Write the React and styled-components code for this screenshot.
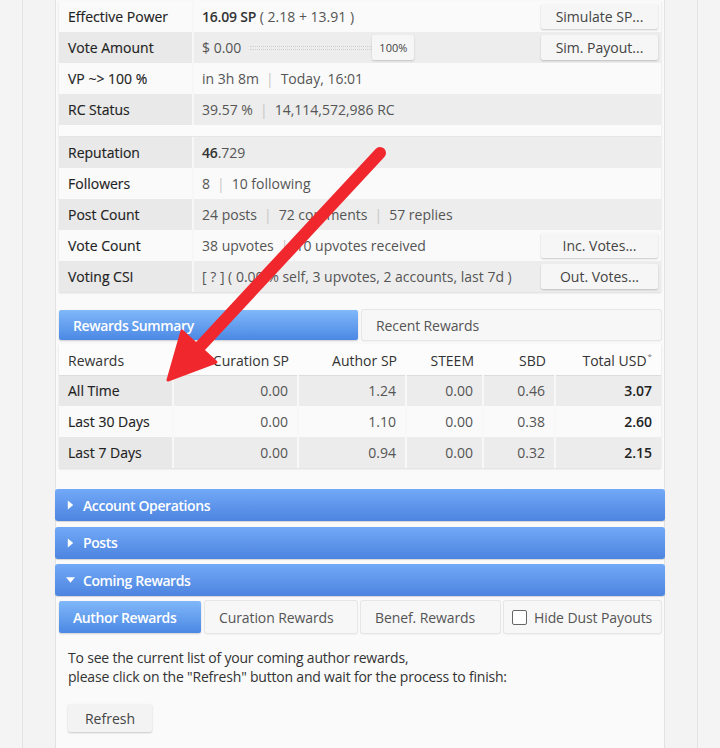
import React from "react";
import styled, { createGlobalStyle } from "styled-components";

const GlobalStyle = createGlobalStyle`
  *, *::before, *::after { box-sizing: border-box; }
  html, body { margin: 0; padding: 0; }
  body {
    background: #f4f4f4;
    font-family: "Open Sans", "DejaVu Sans", sans-serif;
    font-size: 14px;
    color: #333;
    overflow: hidden;
  }
`;

const Page = styled.div`
  position: relative;
  width: 720px;
  height: 748px;
  overflow: hidden;
`;

const Frame = styled.div`
  margin-left: 22px;
  width: 676px;
  height: 100%;
  padding: 0 32px;
  border-left: 1px solid #e3e3e3;
  border-right: 1px solid #e3e3e3;
  background: #f3f3f3;
`;

const Panel = styled.div`
  width: 610px;
  height: 100%;
  border-left: 1px solid #e2e2e2;
  border-right: 1px solid #e2e2e2;
  background: #fafafa;
  display: flex;
  flex-direction: column;
`;

const InfoCard = styled.div`
  margin: 1px 3px 0;
  background: #fbfbfb;
  box-shadow: 0 1px 2px rgba(0, 0, 0, 0.13);
`;

const Group = styled.div`
  & + & {
    margin-top: 11px;
    border-top: 1px solid #e6e6e6;
  }
`;

const Row = styled.div`
  display: grid;
  grid-template-columns: 135px 1fr auto;
  height: 31px;
  align-items: stretch;
  background: ${(p) => (p.$shade ? "#ededed" : "#fafafa")};
`;

const Label = styled.div`
  display: flex;
  align-items: center;
  padding-left: 9px;
  color: #222;
  -webkit-text-stroke: 0.15px #222;
  background: ${(p) => (p.$shade ? "#e9e9e9" : "transparent")};
  border-right: 2px solid #f7f7f7;
`;

const Value = styled.div`
  display: flex;
  align-items: center;
  padding-left: 8px;
  color: #555;
  white-space: nowrap;
`;

const Strong = styled.b`
  font-weight: 600;
  color: #333;
  letter-spacing: -0.2px;
`;

const Sep = styled.span`
  color: #c6c6c6;
  margin: 0 7px;
`;

const Side = styled.div`
  display: flex;
  align-items: center;
  padding-right: 3px;
`;

const SideButton = styled.button`
  width: 117px;
  height: 25px;
  border: none;
  border-radius: 2px;
  background: #f6f6f6;
  box-shadow: 0 1px 2px rgba(0, 0, 0, 0.2);
  font-family: inherit;
  font-size: 14px;
  color: #444;
  padding: 0;
`;

const Track = styled.span`
  display: inline-block;
  width: 122px;
  height: 4px;
  margin-left: 9px;
  border-top: 1px dotted #cfcfcf;
  border-bottom: 1px dotted #cfcfcf;
`;

const Chip = styled.span`
  display: inline-flex;
  align-items: center;
  justify-content: center;
  width: 42px;
  height: 25px;
  background: #f6f6f6;
  box-shadow: 0 1px 2px rgba(0, 0, 0, 0.18);
  border-radius: 2px;
  font-size: 11px;
  color: #444;
`;

const TabBar = styled.div`
  display: flex;
  gap: 4px;
  margin: ${(p) => p.$margin};
`;

const Tab = styled.div`
  display: flex;
  align-items: center;
  gap: 7px;
  flex: ${(p) => (p.$width ? `0 0 ${p.$width}px` : "1")};
  height: ${(p) => p.$height || 30}px;
  padding-left: ${(p) => p.$pad || 14}px;
  border-radius: 2px;
  white-space: nowrap;
  color: ${(p) => (p.$active ? "#fff" : "#555")};
  font-weight: ${(p) => (p.$active ? 600 : 400)};
  letter-spacing: ${(p) => (p.$active ? "-0.4px" : "-0.1px")};
  background: ${(p) =>
    p.$active ? "linear-gradient(#80b8fa, #4b88e4)" : "#f7f7f7"};
  box-shadow: ${(p) =>
    p.$active
      ? "0 1px 2px rgba(0,0,0,0.18)"
      : "0 0 0 1px #e6e6e6, 0 1px 2px rgba(0,0,0,0.12)"};
`;

const CheckBox = styled.span`
  flex: 0 0 15px;
  height: 15px;
  border: 1px solid #666;
  border-radius: 2px;
  background: #fff;
`;

const RewardsTable = styled.table`
  margin: 4px 3px 0;
  width: 602px;
  border-collapse: collapse;
  table-layout: fixed;
  background: #fbfbfb;
  box-shadow: 0 1px 2px rgba(0, 0, 0, 0.12);
`;

const Th = styled.th`
  height: 31px;
  padding: 2px 9px 0;
  font-weight: 400;
  color: #333;
  text-align: ${(p) => (p.$left ? "left" : "right")};
  border-bottom: 1px solid #dcdcdc;
  background: #fcfcfc;
  sup {
    font-size: 8px;
    color: #777;
    vertical-align: 7px;
    margin-left: 1px;
  }
`;

const Td = styled.td`
  height: 31px;
  padding: 0 9px;
  text-align: ${(p) => (p.$left ? "left" : "right")};
  color: ${(p) => (p.$left || p.$bold ? "#222" : "#555")};
  font-weight: ${(p) => (p.$bold ? 600 : 400)};
  -webkit-text-stroke: ${(p) => (p.$left ? "0.15px #222" : "0")};
  border-left: ${(p) => (p.$left ? "none" : "2px solid #f8f8f8")};
  background: ${(p) =>
    p.$shade ? (p.$left ? "#e8e8e8" : "#ececec") : "#fafafa"};
`;

const Accordion = styled.div`
  display: flex;
  flex-direction: column;
  gap: 5.5px;
  margin: 21px -1px 0;
`;

const AccHeader = styled.div`
  display: flex;
  align-items: center;
  height: 32px;
  padding-left: 11px;
  gap: 8px;
  border-radius: 3px;
  background: linear-gradient(#72a9f7, #4c84e0);
  box-shadow: 0 1px 1px rgba(0, 0, 0, 0.15);
  color: #fff;
  font-weight: 600;
  letter-spacing: -0.4px;
`;

const Caret = styled.svg`
  width: 9px;
  height: 10px;
  fill: #fff;
`;

const Notice = styled.p`
  margin: 15px 0 0 12px;
  line-height: 19px;
  color: #333;
  letter-spacing: -0.2px;
`;

const RefreshButton = styled.button`
  align-self: flex-start;
  margin: 18px 0 0 12px;
  width: 84px;
  height: 28px;
  border: none;
  border-radius: 2px;
  background: #f3f3f3;
  box-shadow: 0 1px 2px rgba(0, 0, 0, 0.2);
  font-family: inherit;
  font-size: 14px;
  color: #444;
`;

const Arrow = styled.svg`
  position: absolute;
  left: 0;
  top: 0;
  pointer-events: none;
`;

const rewards = [
  ["All Time", "0.00", "1.24", "0.00", "0.46", "3.07"],
  ["Last 30 Days", "0.00", "1.10", "0.00", "0.38", "2.60"],
  ["Last 7 Days", "0.00", "0.94", "0.00", "0.32", "2.15"],
];

const colWidths = [114, 125, 108, 77, 72, 106];

const InfoRow = ({ label, shade, children, button }) => (
  <Row $shade={shade}>
    <Label $shade={shade}>{label}</Label>
    <Value>{children}</Value>
    <Side>{button && <SideButton>{button}</SideButton>}</Side>
  </Row>
);

const Triangle = ({ open }) => (
  <Caret viewBox="0 0 10 10">
    {open ? <polygon points="0,2 10,2 5,8" /> : <polygon points="2,0 8,5 2,10" />}
  </Caret>
);

export default function App() {
  return (
    <Page>
      <GlobalStyle />
      <Frame>
        <Panel>
          <InfoCard>
            <Group>
              <InfoRow label="Effective Power" button="Simulate SP...">
                <Strong>16.09 SP</Strong>&nbsp;( 2.18 + 13.91 )
              </InfoRow>
              <InfoRow label="Vote Amount" shade button="Sim. Payout...">
                $ 0.00
                <Track />
                <Chip>100%</Chip>
              </InfoRow>
              <InfoRow label="VP ~> 100 %">
                in 3h 8m<Sep>|</Sep>Today, 16:01
              </InfoRow>
              <InfoRow label="RC Status" shade>
                39.57 %<Sep>|</Sep>14,114,572,986 RC
              </InfoRow>
            </Group>
            <Group>
              <InfoRow label="Reputation" shade>
                <Strong>46</Strong>.729
              </InfoRow>
              <InfoRow label="Followers">
                8<Sep>|</Sep>10 following
              </InfoRow>
              <InfoRow label="Post Count" shade>
                24 posts<Sep>|</Sep>72 comments<Sep>|</Sep>57 replies
              </InfoRow>
              <InfoRow label="Vote Count" button="Inc. Votes...">
                38 upvotes<Sep>|</Sep>10 upvotes received
              </InfoRow>
              <InfoRow label="Voting CSI" shade button="Out. Votes...">
                [ ? ] ( 0.00 % self, 3 upvotes, 2 accounts, last 7d )
              </InfoRow>
            </Group>
          </InfoCard>

          <TabBar $margin="18px 3px 0">
            <Tab $active>Rewards Summary</Tab>
            <Tab>Recent Rewards</Tab>
          </TabBar>

          <RewardsTable>
            <colgroup>
              {colWidths.map((w, i) => (
                <col key={i} style={{ width: w }} />
              ))}
            </colgroup>
            <thead>
              <tr>
                <Th $left>Rewards</Th>
                <Th>Curation SP</Th>
                <Th>Author SP</Th>
                <Th>STEEM</Th>
                <Th>SBD</Th>
                <Th>
                  Total USD<sup>*</sup>
                </Th>
              </tr>
            </thead>
            <tbody>
              {rewards.map((r, i) => (
                <tr key={r[0]}>
                  {r.map((c, j) => (
                    <Td key={j} $left={j === 0} $bold={j === 5} $shade={i !== 1}>
                      {c}
                    </Td>
                  ))}
                </tr>
              ))}
            </tbody>
          </RewardsTable>

          <Accordion>
            <AccHeader>
              <Triangle />
              Account Operations
            </AccHeader>
            <AccHeader>
              <Triangle />
              Posts
            </AccHeader>
            <AccHeader>
              <Triangle open />
              Coming Rewards
            </AccHeader>
          </Accordion>

          <TabBar $margin="5px 3px 0">
            <Tab $active $width={142} $height={32}>Author Rewards</Tab>
            <Tab $width={152} $height={32}>Curation Rewards</Tab>
            <Tab $width={139} $height={32}>Benef. Rewards</Tab>
            <Tab $width={157} $height={32} $pad={8}>
              <CheckBox />
              Hide Dust Payouts
            </Tab>
          </TabBar>

          <Notice>
            To see the current list of your coming author rewards,
            <br />
            please click on the "Refresh" button and wait for the process to finish:
          </Notice>
          <RefreshButton>Refresh</RefreshButton>
        </Panel>
      </Frame>

      <Arrow width="720" height="748" viewBox="0 0 720 748">
        <line
          x1="380"
          y1="153"
          x2="195"
          y2="352"
          stroke="#f0282e"
          strokeWidth="12"
          strokeLinecap="round"
        />
        <polygon
          points="168,380 182,331 216,362"
          fill="#f0282e"
          stroke="#f0282e"
          strokeWidth="3"
          strokeLinejoin="round"
        />
      </Arrow>
    </Page>
  );
}
